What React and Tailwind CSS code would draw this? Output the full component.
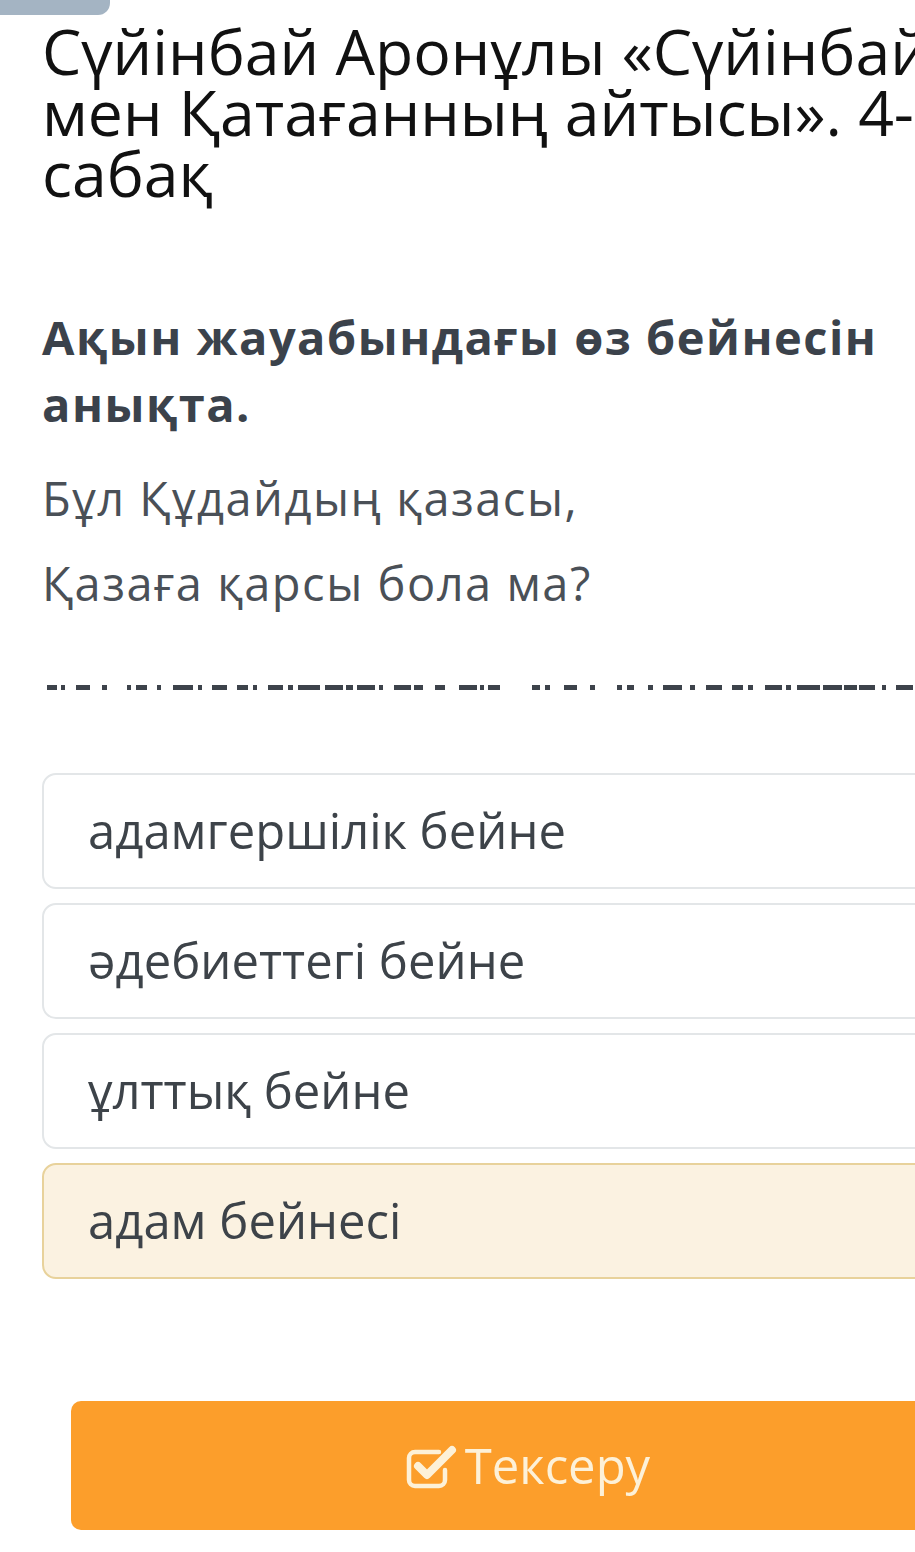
import React from 'react';

const dashes = [
    [47, 57], [61, 65], [76, 90], [102, 107], [127, 131], [136, 147], [157, 161], [173, 193],
    [198, 202], [212, 227], [237, 248], [253, 257], [268, 283], [288, 293], [298, 320], [325, 343],
    [346, 353], [357, 375], [379, 383], [394, 411], [414, 423], [435, 445], [459, 477], [480, 484],
    [488, 500], [532, 540], [545, 550], [564, 577], [590, 595], [617, 622], [627, 634], [648, 653],
    [663, 682], [690, 695], [706, 722], [732, 743], [748, 753], [765, 782], [786, 791], [797, 820],
    [823, 842], [844, 857], [859, 875], [882, 886], [896, 913],
];

const options = [
    { label: 'адамгершілік бейне', selected: false },
    { label: 'әдебиеттегі бейне', selected: false },
    { label: 'ұлттық бейне', selected: false },
    { label: 'адам бейнесі', selected: true },
];

const CheckSquare = () => (
    <svg className="w-[56px] h-[48px]" viewBox="0 0 56 48" fill="none">
        <path d="M34 10H10a6 6 0 0 0-6 6v22a6 6 0 0 0 6 6h24a6 6 0 0 0 6-6v-10" stroke="#fdf1d8" strokeWidth="4.5" strokeLinecap="round" />
        <path d="M13 24l9 9L47 8" stroke="#fdf1d8" strokeWidth="8" strokeLinecap="round" strokeLinejoin="round" />
    </svg>
);

export default function App() {
    return (
        <div className="w-[915px] h-[1552px] overflow-hidden bg-white relative" style={{ fontFamily: '"Open Sans", "Noto Sans", sans-serif' }}>
            <div className="w-[110px] h-[15px] bg-[#a4b4c3] rounded-br-[12px]" />

            <h1 className="mt-[5px] pl-[42px] text-[62.5px] leading-[61px] text-[#111111] whitespace-nowrap font-normal">
                Сүйінбай Аронұлы «Сүйінбай<br />
                мен Қатағанның айтысы». 4-<br />
                сабақ
            </h1>

            <div className="mt-[101px] pl-[42px] text-[47px] leading-[67px] font-bold tracking-[1.5px] text-[#3b424b] whitespace-nowrap">
                Ақын жауабындағы өз бейнесін<br />
                анықта.
            </div>

            <div className="mt-[18px] pl-[42px] text-[47px] leading-[85px] tracking-[1.5px] text-[#4a5057] whitespace-nowrap">
                <p>Бұл Құдайдың қазасы,</p>
                <p>Қазаға қарсы бола ма?</p>
            </div>

            <div className="relative h-[5px] mt-[59px]">
                {dashes.map(([a, b], i) => (
                    <span key={i} className="absolute top-0 h-[5px] bg-[#3d434b]" style={{ left: a, width: b - a }} />
                ))}
            </div>

            <div className="mt-[83px] ml-[42px] w-[960px] flex flex-col gap-[14px]">
                {options.map((o) => (
                    <div
                        key={o.label}
                        className={`h-[116px] rounded-[14px] border-2 flex items-center pl-[44px] text-[49px] text-[#3d4349] ${o.selected ? 'bg-[#fbf2e1] border-[#e8d29b]' : 'bg-white border-[#e3e6e8]'}`}
                    >
                        {o.label}
                    </div>
                ))}
            </div>

            <div className="mt-[122px] ml-[71px] w-[913px] h-[129px] rounded-[10px] bg-[#fc9e2b] flex items-center justify-center gap-[4px]">
                <CheckSquare />
                <span className="text-[49px] text-[#fdf1d8]">Тексеру</span>
            </div>
        </div>
    );
}
